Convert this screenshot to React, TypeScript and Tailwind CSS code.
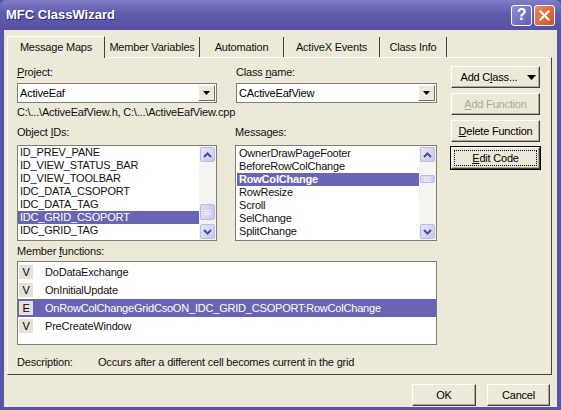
import React from "react";

// ─── Data ─────────────────────────────────────────────────────────────────────

const TABS = ["Message Maps", "Member Variables", "Automation", "ActiveX Events", "Class Info"];
const TAB_WIDTHS = ["w-[98px]", "w-[95px]", "w-[84px]", "w-[96px]", "w-[67px]"];

const OBJECT_IDS = [
  "ID_PREV_PANE",
  "ID_VIEW_STATUS_BAR",
  "ID_VIEW_TOOLBAR",
  "IDC_DATA_CSOPORT",
  "IDC_DATA_TAG",
  "IDC_GRID_CSOPORT",
  "IDC_GRID_TAG",
];

const MESSAGES = [
  "OwnerDrawPageFooter",
  "BeforeRowColChange",
  "RowColChange",
  "RowResize",
  "Scroll",
  "SelChange",
  "SplitChange",
];

const MEMBERS = [
  { kind: "V", name: "DoDataExchange" },
  { kind: "V", name: "OnInitialUpdate" },
  { kind: "E", name: "OnRowColChangeGridCsoON_IDC_GRID_CSOPORT:RowColChange" },
  { kind: "V", name: "PreCreateWindow" },
];

// ─── Small pieces ─────────────────────────────────────────────────────────────

function Chevron({ up }: { up?: boolean }) {
  return (
    <svg width="9" height="6" viewBox="0 0 9 6" fill="none" stroke="#4d4b8c" strokeWidth="2">
      {up ? <path d="M1 5l3.5-3.5L8 5" /> : <path d="M1 1l3.5 3.5L8 1" />}
    </svg>
  );
}

function ScrollArrow({ up }: { up?: boolean }) {
  return (
    <div className="w-[15px] h-[15px] rounded-[2px] border border-[#b9bae6] bg-gradient-to-br from-[#e6e7f8] to-[#c6c7ec] flex items-center justify-center">
      <Chevron up={up} />
    </div>
  );
}

function Scrollbar({ thumbTop, thumbHeight }: { thumbTop: string; thumbHeight: string }) {
  return (
    <div className="w-[17px] h-full bg-[#f5f4f0] flex flex-col items-center pt-[1px] pb-[1px]">
      <ScrollArrow up />
      <div className="flex-1 w-full flex flex-col items-center">
        <div className={thumbTop} />
        <div
          className={`${thumbHeight} w-[15px] rounded-[2px] border border-[#b9bae6] bg-gradient-to-r from-[#dcdcf4] to-[#c9caee] flex flex-col items-center justify-center gap-[1px]`}
        >
          <div className="w-[7px] h-[1px] bg-[#eeeefc]" />
          <div className="w-[7px] h-[1px] bg-[#eeeefc]" />
          <div className="w-[7px] h-[1px] bg-[#eeeefc]" />
        </div>
      </div>
      <ScrollArrow />
    </div>
  );
}

function Combo({ value }: { value: string }) {
  return (
    <div className="mt-[4px] h-[20px] w-full border border-[#7f7d76] bg-white flex items-center">
      <span className="flex-1 pl-[2px] text-black">{value}</span>
      <div className="mr-[1px] w-[17px] h-[16px] border border-t-white border-l-white border-r-[#716f64] border-b-[#716f64] bg-[#ece9d8] flex items-center justify-center">
        <svg width="7" height="4" viewBox="0 0 7 4">
          <path d="M0 0h7L3.5 4z" fill="#000" />
        </svg>
      </div>
    </div>
  );
}

function Label({ pre, u, post }: { pre: string; u?: string; post?: string }) {
  return (
    <div className="h-[13px] leading-[13px]">
      {pre}
      {u && <span className="underline underline-offset-1">{u}</span>}
      {post}
    </div>
  );
}

function DlgButton({
  children,
  disabled,
  focused,
  className = "",
}: {
  children: React.ReactNode;
  disabled?: boolean;
  focused?: boolean;
  className?: string;
}) {
  return (
    <div
      className={`h-[24px] ${focused ? "border border-black" : "border border-transparent"} ${className}`}
    >
      <div className="h-full w-full border border-t-white border-l-white border-r-[#404040] border-b-[#404040] bg-[#ece9d8] shadow-[inset_-1px_-1px_0_#aca899] flex items-center justify-center p-[2px]">
        <div
          className={`h-full w-full flex items-center justify-center ${
            focused ? "border border-dotted border-black" : ""
          } ${disabled ? "text-[#aca899]" : "text-black"}`}
        >
          {children}
        </div>
      </div>
    </div>
  );
}

// ─── Component ──────────────────────────────────────────────────────────────

export default function App() {
  return (
    <div
      className="w-[561px] h-[410px] bg-[#5955a6] flex flex-col text-[11px] tracking-[-0.2px] text-[#111] overflow-hidden"
      style={{ fontFamily: '"Liberation Sans", Arial, sans-serif' }}
    >
      {/* ── Title bar ── */}
      <div className="h-[30px] shrink-0 bg-gradient-to-b from-[#7f7cc8] via-[#5d59ab] to-[#5551a3] flex items-center pl-[6px] pr-[6px] rounded-t-[6px]">
        <span className="flex-1 text-white font-bold text-[13px] tracking-normal [text-shadow:1px_1px_0_#2e2b6e]">
          MFC ClassWizard
        </span>
        <div className="w-[21px] h-[21px] rounded-[3px] border border-white bg-gradient-to-br from-[#9290d6] to-[#5f5cb0] flex items-center justify-center text-white font-bold text-[16px] leading-none">
          ?
        </div>
        <div className="ml-[2px] w-[21px] h-[21px] rounded-[3px] border border-white bg-gradient-to-br from-[#ec8a5c] to-[#d24a24] flex items-center justify-center">
          <svg width="11" height="11" viewBox="0 0 11 11" stroke="white" strokeWidth="2.2" strokeLinecap="square">
            <path d="M1.5 1.5l8 8M9.5 1.5l-8 8" />
          </svg>
        </div>
      </div>

      {/* ── Client area ── */}
      <div className="mx-[4px] mb-[3px] flex-1 bg-[#ece9d8] flex flex-col pl-[3px] pr-[5px]">
        {/* Tabs */}
        <div className="h-[27px] pt-[5px] flex items-end">
          {TABS.map((t, i) => (
            <div
              key={t}
              className={`${TAB_WIDTHS[i]} ${
                i === 0 ? "h-[22px] border-l border-t border-white bg-[#ece9d8] relative top-[1px] z-10" : "h-[20px]"
              } border-r border-r-[#404040] flex items-center justify-center`}
            >
              {t}
            </div>
          ))}
        </div>

        {/* Panel */}
        <div className="h-[318px] border border-t-white border-l-white border-r-[#404040] border-b-[#404040] flex pl-[9px] pt-[7px]">
          {/* Left part */}
          <div className="w-[420px] flex flex-col pt-[1px]">
            <div className="grid grid-cols-[200px_201px] gap-x-[19px]">
              <div>
                <Label pre="" u="P" post="roject:" />
                <Combo value="ActiveEaf" />
              </div>
              <div>
                <Label pre="Class " u="n" post="ame:" />
                <Combo value="CActiveEafView" />
              </div>
            </div>

            <div className="mt-[3px] h-[13px] leading-[13px]">
              C:\...\ActiveEafView.h, C:\...\ActiveEafView.cpp
            </div>

            <div className="mt-[7px] grid grid-cols-[200px_202px] gap-x-[18px]">
              <div>
                <Label pre="Object " u="I" post="Ds:" />
                <div className="mt-[6px] h-[96px] border border-[#7f7d76] bg-white flex">
                  <div className="flex-1">
                    {OBJECT_IDS.map((o, i) => (
                      <div
                        key={o}
                        className={`h-[13px] leading-[13px] pl-[2px] ${
                          i === 5 ? "bg-[#6866b4] text-white" : ""
                        }`}
                      >
                        {o}
                      </div>
                    ))}
                  </div>
                  <Scrollbar thumbTop="h-[42px]" thumbHeight="h-[16px]" />
                </div>
              </div>
              <div>
                <Label pre="Messages:" />
                <div className="mt-[6px] h-[96px] border border-[#7f7d76] bg-white flex">
                  <div className="flex-1 pt-[1px] pl-[1px]">
                    {MESSAGES.map((m, i) => (
                      <div
                        key={m}
                        className={`h-[13px] leading-[13px] pl-[2px] ${
                          i === 2 ? "bg-[#6866b4] text-white font-bold" : ""
                        }`}
                      >
                        {m}
                      </div>
                    ))}
                  </div>
                  <Scrollbar thumbTop="h-[13px]" thumbHeight="h-[8px]" />
                </div>
              </div>
            </div>

            <div className="mt-[4px]">
              <Label pre="Member " u="f" post="unctions:" />
            </div>
            <div className="mt-[3px] h-[84px] border border-[#7f7d76] bg-white pt-[1px]">
              {MEMBERS.map((m, i) => (
                <div
                  key={m.name}
                  className={`h-[18px] flex items-center ${i === 2 ? "bg-[#6866b4] text-white" : ""}`}
                >
                  <div className="w-[14px] h-[14px] ml-[1px] bg-[#e4e2d8] text-black flex items-center justify-center">
                    {m.kind}
                  </div>
                  <span className="ml-[12px]">{m.name}</span>
                </div>
              ))}
            </div>

            <div className="mt-[11px] h-[13px] leading-[13px] flex">
              <span className="w-[81px]">Description:</span>
              <span>Occurs after a different cell becomes current in the grid</span>
            </div>
          </div>

          {/* Right buttons */}
          <div className="ml-[13px] w-[91px] flex flex-col gap-[3px]">
            <DlgButton>
              <span className="pl-[6px]">
                Add C<span className="underline">l</span>ass...
              </span>
              <svg width="9" height="5" viewBox="0 0 9 5" className="ml-[10px]">
                <path d="M0 0h9L4.5 5z" fill="#000" />
              </svg>
            </DlgButton>
            <DlgButton disabled>
              <span className="underline">A</span>dd Function
            </DlgButton>
            <DlgButton>
              <span className="underline">D</span>elete Function
            </DlgButton>
            <DlgButton focused>
              <span className="underline">E</span>dit Code
            </DlgButton>
          </div>
        </div>

        {/* Bottom buttons */}
        <div className="mt-[8px] flex justify-end gap-[9px] pr-[1px]">
          <DlgButton className="w-[66px] h-[23px]">OK</DlgButton>
          <DlgButton className="w-[65px] h-[23px]">Cancel</DlgButton>
        </div>
      </div>
    </div>
  );
}
